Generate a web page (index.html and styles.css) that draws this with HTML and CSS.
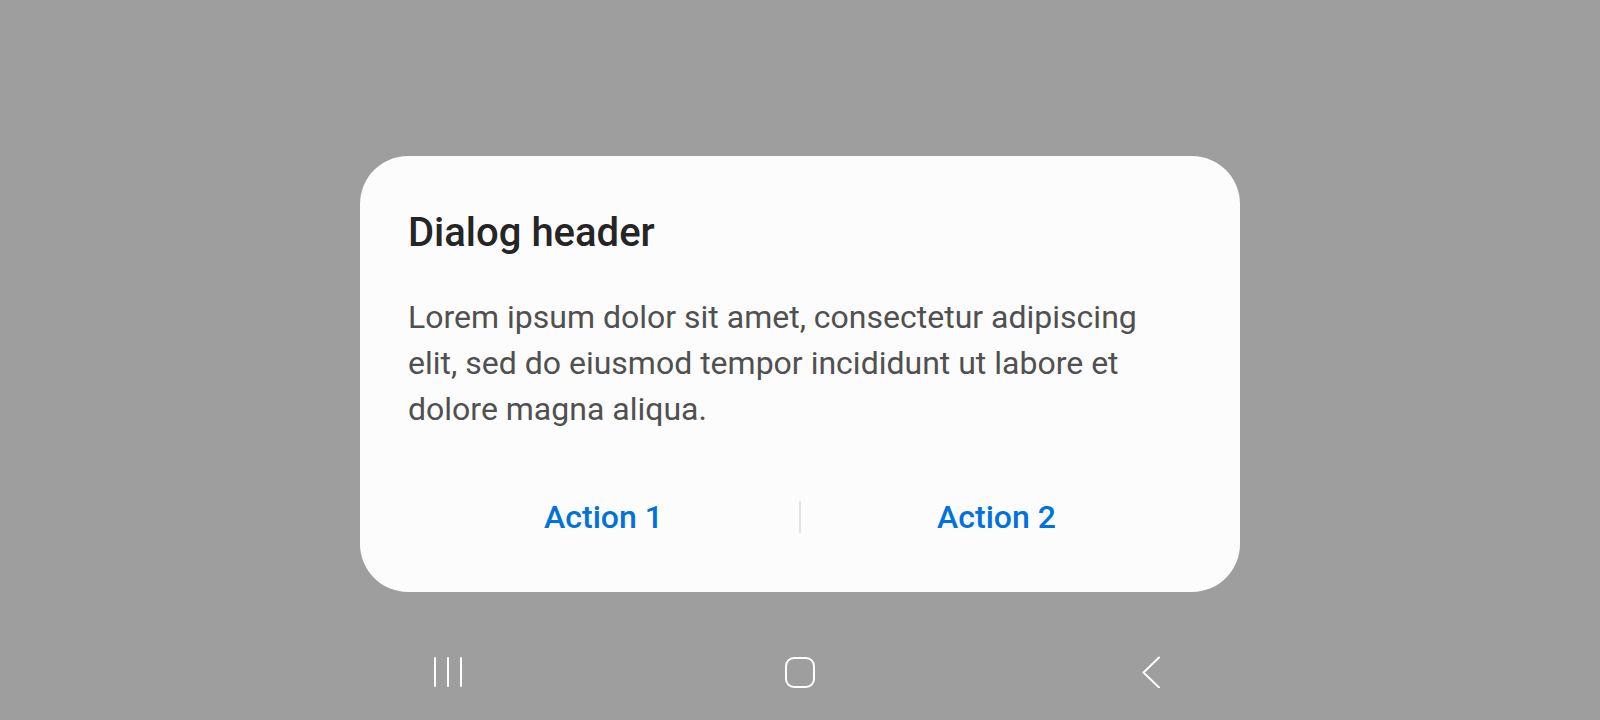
FILE: index.html
```html
<!DOCTYPE html>
<html>
<head>
<meta charset="utf-8">
<link rel="stylesheet" href="styles.css">
</head>
<body>
<div class="screen">
  <div class="dialog">
    <h1 class="dialog-title">Dialog header</h1>
    <p class="dialog-body">Lorem ipsum dolor sit amet, consectetur adipiscing elit, sed do eiusmod tempor incididunt ut labore et dolore magna aliqua.</p>
    <div class="dialog-actions">
      <button class="action">Action 1</button>
      <span class="divider"></span>
      <button class="action">Action 2</button>
    </div>
  </div>
  <nav class="navbar">
    <span class="nav-btn">
      <svg width="32" height="32" viewBox="0 0 32 32"><g stroke="#fff" stroke-width="2" stroke-linecap="round"><line x1="3" y1="2" x2="3" y2="30"/><line x1="16" y1="2" x2="16" y2="30"/><line x1="29" y1="2" x2="29" y2="30"/></g></svg>
    </span>
    <span class="nav-btn">
      <svg width="32" height="32" viewBox="0 0 32 32"><rect x="2" y="2" width="28" height="29" rx="8" fill="none" stroke="#fff" stroke-width="2"/></svg>
    </span>
    <span class="nav-btn">
      <svg width="32" height="32" viewBox="0 0 32 32"><polyline points="23,1.5 7.5,16.5 23,31.5" fill="none" stroke="#fff" stroke-width="2" stroke-linecap="round" stroke-linejoin="miter"/></svg>
    </span>
  </nav>
</div>
</body>
</html>
```
FILE: styles.css
```css
* { box-sizing: border-box; }
html, body { margin: 0; padding: 0; }
body {
  background: #9e9e9e;
  font-family: Roboto, "Liberation Sans", sans-serif;
  width: 1600px;
  height: 720px;
  overflow: hidden;
}
.screen {
  display: flex;
  flex-direction: column;
  align-items: center;
  padding-top: 156px;
  height: 720px;
}
.dialog {
  width: 880px;
  height: 436px;
  background: #fcfcfc;
  border-radius: 48px;
  padding: 53px 48px 0 48px;
  display: flex;
  flex-direction: column;
}
.dialog-title {
  margin: 0;
  font-size: 40px;
  font-weight: 500;
  line-height: 48px;
  color: #252525;
}
.dialog-body {
  margin: 37px 0 0 0;
  max-width: 760px;
  font-size: 32px;
  line-height: 46px;
  color: #505050;
}
.dialog-actions {
  margin-top: 69px;
  height: 32px;
  display: flex;
  align-items: center;
}
.action {
  flex: 1;
  border: none;
  background: none;
  padding: 0;
  font-family: Roboto, "Liberation Sans", sans-serif;
  font-size: 32px;
  font-weight: 500;
  line-height: 32px;
  color: #0072de;
}
.divider {
  width: 2px;
  height: 32px;
  background: #e4e4e4;
}
.navbar {
  width: 880px;
  margin-top: 64px;
  padding: 0 72px;
  display: flex;
  justify-content: space-between;
}
.nav-btn {
  width: 32px;
  height: 32px;
  display: flex;
}
```
